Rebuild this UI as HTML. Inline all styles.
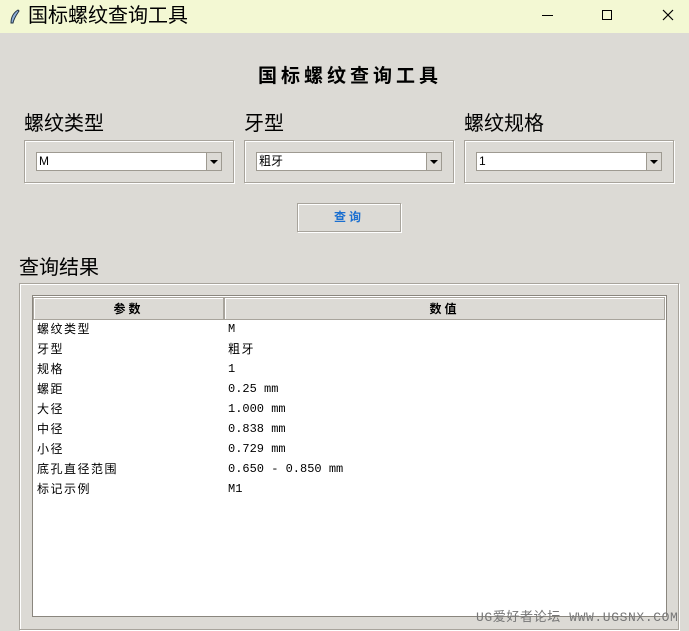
<!DOCTYPE html>
<html><head><meta charset="utf-8"><style>
*{margin:0;padding:0;box-sizing:border-box}
body{width:689px;height:631px;background:#dcdad5;position:relative;overflow:hidden;font-family:"Liberation Sans","Noto Sans CJK SC",sans-serif;color:#000}
.abs{position:absolute}
.tb{left:0;top:0;width:689px;height:33px;background:#f3f8d3}
.frame{border:1px solid #a8a49c;box-shadow:inset 1px 1px 0 #fff,1px 1px 0 #fff}
.combo{background:#fff;border:1px solid #9e9a91;height:19px;font-size:12px;line-height:17px;padding-left:2px}
.combo .btn{position:absolute;right:0;top:0;width:15px;height:17px;background:#dcdad5;border-left:1px solid #9e9a91}
.combo .btn:after{content:"";position:absolute;left:3px;top:7px;border-left:4px solid transparent;border-right:4px solid transparent;border-top:4px solid #000}
.lbl{font-size:20px;line-height:24px}
.row{font-size:12px;line-height:20px;height:20px;letter-spacing:1.5px}
.v .row{letter-spacing:0;font-family:"Liberation Mono","Noto Sans CJK SC",monospace}
</style></head><body>
<div class="abs tb"></div>
<svg class="abs" style="left:9px;top:9px" width="12" height="16" viewBox="0 0 12 16"><path d="M9 1 C4 4 2 9 2 14 L4 14 C5 9 8 5 10 2 Z" fill="#8fb0d8" stroke="#234" stroke-width="1"/></svg>
<div class="abs" style="left:28px;top:3px;font-size:20px;line-height:26px">国标螺纹查询工具</div>
<div class="abs" style="left:542px;top:15px;width:11px;height:1px;background:#000"></div>
<div class="abs" style="left:602px;top:10px;width:10px;height:10px;border:1px solid #000"></div>
<svg class="abs" style="left:662px;top:9px" width="12" height="12"><path d="M1 1L11 11M11 1L1 11" stroke="#000" stroke-width="1.2"/></svg>

<div class="abs" style="left:258px;top:64px;font-size:19px;font-weight:bold;line-height:26px;letter-spacing:4px;white-space:nowrap">国标螺纹查询工具</div>

<div class="abs lbl" style="left:24px;top:112px">螺纹类型</div>
<div class="abs lbl" style="left:244px;top:112px">牙型</div>
<div class="abs lbl" style="left:464px;top:112px">螺纹规格</div>

<div class="abs frame" style="left:24px;top:140px;width:210px;height:43px"></div>
<div class="abs frame" style="left:244px;top:140px;width:210px;height:43px"></div>
<div class="abs frame" style="left:464px;top:140px;width:210px;height:43px"></div>
<div class="abs combo" style="left:36px;top:152px;width:186px">M<div class="btn"></div></div>
<div class="abs combo" style="left:256px;top:152px;width:186px">粗牙<div class="btn"></div></div>
<div class="abs combo" style="left:476px;top:152px;width:186px">1<div class="btn"></div></div>

<div class="abs frame" style="left:297px;top:203px;width:104px;height:29px;text-align:center;font-size:12px;font-weight:bold;color:#1a6fd0;line-height:27px;letter-spacing:3px">查询</div>

<div class="abs lbl" style="left:19px;top:256px">查询结果</div>
<div class="abs frame" style="left:19px;top:283px;width:660px;height:347px"></div>
<div class="abs" style="left:32px;top:295px;width:635px;height:322px;background:#fff;border:1px solid #8a867e"></div>
<div class="abs frame" style="left:33px;top:297px;width:191px;height:23px;background:#dcdad5;text-align:center;font-size:12px;font-weight:bold;line-height:22px;letter-spacing:3px">参数</div>
<div class="abs frame" style="left:224px;top:297px;width:441px;height:23px;background:#dcdad5;text-align:center;font-size:12px;font-weight:bold;line-height:22px;letter-spacing:3px">数值</div>
<div class="abs" style="left:37px;top:319px">
<div class="row">螺纹类型</div><div class="row">牙型</div><div class="row">规格</div><div class="row">螺距</div><div class="row">大径</div><div class="row">中径</div><div class="row">小径</div><div class="row">底孔直径范围</div><div class="row">标记示例</div>
</div>
<div class="abs v" style="left:228px;top:319px">
<div class="row">M</div><div class="row" style="letter-spacing:1.5px;font-family:'Liberation Sans','Noto Sans CJK SC',sans-serif">粗牙</div><div class="row">1</div><div class="row">0.25 mm</div><div class="row">1.000 mm</div><div class="row">0.838 mm</div><div class="row">0.729 mm</div><div class="row">0.650 - 0.850 mm</div><div class="row">M1</div>
</div>
<div class="abs" style="left:476px;top:610px;font-size:13px;line-height:16px;color:#777;font-family:'Liberation Mono','Noto Sans CJK SC',monospace;white-space:nowrap;letter-spacing:0.6px">UG爱好者论坛 WWW.UGSNX.COM</div>
</body></html>
